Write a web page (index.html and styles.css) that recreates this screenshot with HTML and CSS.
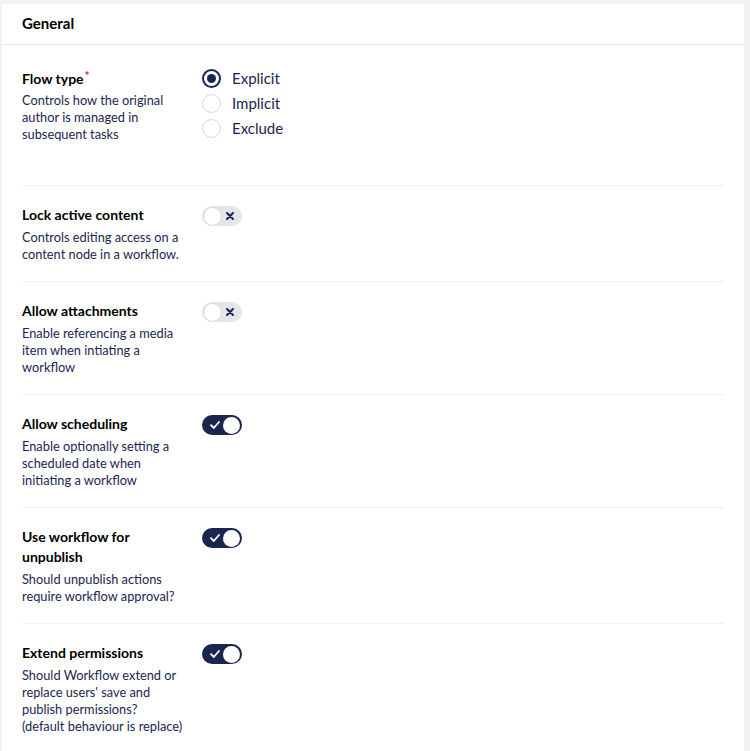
FILE: index.html
```html
<!DOCTYPE html>
<html lang="en">
<head>
<meta charset="utf-8">
<title>General</title>
<link rel="stylesheet" href="styles.css">
</head>
<body>
<div class="card">
  <div class="card-header">General</div>
  <div class="card-body">
    <div class="prop prop-first">
      <div class="prop-label">
        <div class="label">Flow type<span class="req">*</span></div>
        <div class="desc">Controls how the original author is managed in subsequent tasks</div>
      </div>
      <div class="prop-control radios">
        <label class="radio"><span class="radio-dot checked"></span><span class="radio-text">Explicit</span></label>
        <label class="radio"><span class="radio-dot"></span><span class="radio-text">Implicit</span></label>
        <label class="radio"><span class="radio-dot"></span><span class="radio-text">Exclude</span></label>
      </div>
    </div>
    <div class="prop">
      <div class="prop-label">
        <div class="label">Lock active content</div>
        <div class="desc">Controls editing access on a content node in a workflow.</div>
      </div>
      <div class="prop-control">
        <span class="toggle off"><span class="knob"></span><svg class="icon-x" viewBox="0 0 8 8" width="8" height="8"><path d="M1 1L7 7M7 1L1 7" stroke="#1b264f" stroke-width="2" stroke-linecap="round"/></svg></span>
      </div>
    </div>
    <div class="prop">
      <div class="prop-label">
        <div class="label">Allow attachments</div>
        <div class="desc">Enable referencing a media item when intiating a workflow</div>
      </div>
      <div class="prop-control">
        <span class="toggle off"><span class="knob"></span><svg class="icon-x" viewBox="0 0 8 8" width="8" height="8"><path d="M1 1L7 7M7 1L1 7" stroke="#1b264f" stroke-width="2" stroke-linecap="round"/></svg></span>
      </div>
    </div>
    <div class="prop">
      <div class="prop-label">
        <div class="label">Allow scheduling</div>
        <div class="desc">Enable optionally setting a scheduled date when initiating a workflow</div>
      </div>
      <div class="prop-control">
        <span class="toggle on"><svg class="icon-check" viewBox="0 0 10 8" width="10" height="8"><path d="M1 4.2L3.8 7L9 1" stroke="#fff" stroke-width="1.8" fill="none" stroke-linecap="round" stroke-linejoin="round"/></svg><span class="knob"></span></span>
      </div>
    </div>
    <div class="prop">
      <div class="prop-label">
        <div class="label">Use workflow for unpublish</div>
        <div class="desc">Should unpublish actions require workflow approval?</div>
      </div>
      <div class="prop-control">
        <span class="toggle on"><svg class="icon-check" viewBox="0 0 10 8" width="10" height="8"><path d="M1 4.2L3.8 7L9 1" stroke="#fff" stroke-width="1.8" fill="none" stroke-linecap="round" stroke-linejoin="round"/></svg><span class="knob"></span></span>
      </div>
    </div>
    <div class="prop">
      <div class="prop-label">
        <div class="label">Extend permissions</div>
        <div class="desc">Should Workflow extend or replace users' save and publish permissions?<br>(default behaviour is replace)</div>
      </div>
      <div class="prop-control">
        <span class="toggle on"><svg class="icon-check" viewBox="0 0 10 8" width="10" height="8"><path d="M1 4.2L3.8 7L9 1" stroke="#fff" stroke-width="1.8" fill="none" stroke-linecap="round" stroke-linejoin="round"/></svg><span class="knob"></span></span>
      </div>
    </div>
  </div>
</div>
</body>
</html>
```

FILE: styles.css
```css
* { box-sizing: border-box; }
html, body { margin: 0; }
body {
  background: #f3f2f2;
  padding: 4px 6px 0 2px;
  font-family: Lato, "Open Sans", sans-serif;
  color: #1b264f;
}
.card {
  background: #fff;
  border-radius: 3px 3px 0 0;
  min-height: 760px;
}
.card-header {
  height: 41px;
  padding: 0 20px 3px;
  display: flex;
  align-items: center;
  border-bottom: 1px solid #e9e9eb;
  font-size: 15px;
  font-weight: 700;
  color: #000;
}
.card-body { padding: 0 20px; }
.prop {
  display: flex;
  gap: 18px;
  padding: 19px 0 18px;
  border-bottom: 1px solid #f1f0f0;
}
.prop:last-child { border-bottom: 0; }
.prop-first { padding-top: 24px; padding-bottom: 42px; }
.prop-label { width: 162px; flex: none; }
.label {
  font-size: 14px;
  line-height: 20px;
  font-weight: 700;
  color: #000;
}
.req { color: #d42054; font-size: 12px; vertical-align: top; line-height: 14px; margin-left: 1px; }
.desc {
  margin-top: 4px;
  font-size: 12.8px;
  line-height: 17px;
  color: #1b264f;
}
.prop-first .desc { margin-top: 3px; }
.prop-control { padding-top: 1px; }
.radios { display: flex; flex-direction: column; gap: 6px; padding-top: 0; }
.radio { display: flex; align-items: center; gap: 11px; height: 19px; }
.radio-dot {
  width: 19px; height: 19px; border-radius: 50%;
  border: 1px solid #d8d7d9; background: #fff;
  display: flex; align-items: center; justify-content: center;
}
.radio-dot.checked { border: 2px solid #1b264f; }
.radio-dot.checked::after {
  content: ""; width: 9px; height: 9px; border-radius: 50%; background: #1b264f;
}
.radio-text { font-size: 15px; color: #1b264f; line-height: 19px; }
.toggle {
  width: 40px; height: 20px; border-radius: 10px;
  display: flex; align-items: center; justify-content: space-between;
  padding: 0 2px;
}
.toggle.off { background: #e6e6e8; padding-right: 8px; }
.toggle.on { background: #1b264f; padding-left: 8px; }
.knob {
  width: 17px; height: 17px; border-radius: 50%; background: #fff;
}
.toggle.off .knob { box-shadow: 0 0 0 1px #d8d7d9; }
.icon-x, .icon-check { display: block; }
```
